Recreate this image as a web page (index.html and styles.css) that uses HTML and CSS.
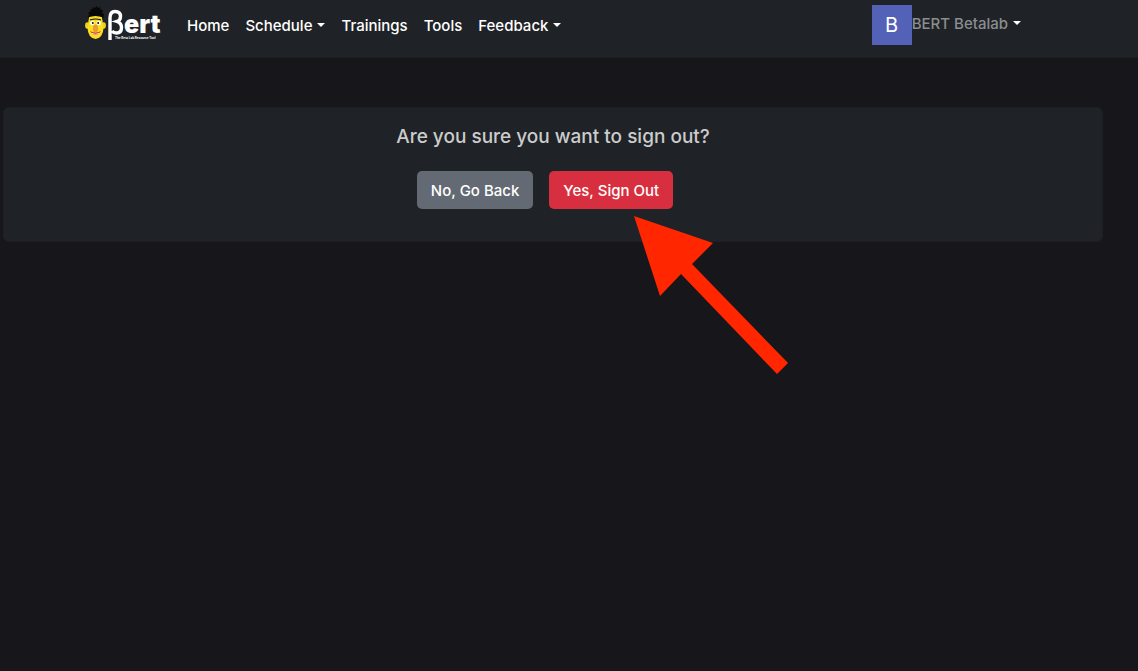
FILE: index.html
```
<!DOCTYPE html>
<html lang="en">
<head>
<meta charset="utf-8">
<meta name="viewport" content="width=device-width, initial-scale=1">
<title>Sign Out - Bert</title>
<link rel="stylesheet" href="styles.css">
</head>
<body>
<header class="navbar">
  <a class="brand" href="#" aria-label="Bert home">
    <svg class="brand-logo" viewBox="0 0 78 38" width="78" height="38">
      <path d="M4 15 L5 9 L4 8 L6.500 6.500 L6 4.500 L8.500 4 L9 2 L11 3 L12.500 1 L14 3 L16 2 L16.500 4.500 L19 5 L18 8 L20 9 L19 15Z" fill="#080808"/>
      <ellipse cx="3.300" cy="20.500" rx="2.200" ry="3.200" fill="#f0cf20"/>
      <ellipse cx="19.700" cy="20.500" rx="2.200" ry="3.200" fill="#f0cf20"/>
      <path d="M5 12 Q11.500 3 18 12 L19.500 23 Q19 33 11.500 34 Q4 33 3.500 23Z" fill="#fade1f"/>
      <path d="M4 12.500 Q11.500 9.500 19 12.500 L18 10 Q11.500 3 5 10Z" fill="#080808"/>
      <path d="M6 15 Q11.500 13 17 15" stroke="#111" stroke-width="1.200" fill="none"/>
      <circle cx="8.300" cy="18" r="2.300" fill="#fff"/>
      <circle cx="14.700" cy="18" r="2.300" fill="#fff"/>
      <circle cx="8.800" cy="18" r="1" fill="#111"/>
      <circle cx="14.200" cy="18" r="1" fill="#111"/>
      <path d="M6 26 Q11.500 34 17 26 Q11.500 29 6 26Z" fill="#c52b2b"/>
      <path d="M7.500 27.500 Q11.500 30 15.500 27.500 L14.500 29 Q11.500 30 8.500 29Z" fill="#fff"/>
      <ellipse cx="11.500" cy="23.500" rx="2.600" ry="4" fill="#f39a2c"/>
      <path d="M26 35 V13 Q26 6.500 31 6.500 Q36.500 6.500 36.500 11.500 Q36.500 15.500 33 16.500 Q37.500 18 37.500 22.500 Q37.500 28 32.500 28 Q29.500 28 28 26" fill="none" stroke="#fff" stroke-width="3.400"/>
      <text class="logo-word" x="40" y="28">ert</text>
      <text class="logo-tag" x="31" y="34">The Beta Lab Resource Tool</text>
    </svg>
  </a>
  <nav class="nav-links" aria-label="Main">
    <a class="nav-link" href="#">Home</a>
    <a class="nav-link caret" href="#">Schedule</a>
    <a class="nav-link" href="#">Trainings</a>
    <a class="nav-link" href="#">Tools</a>
    <a class="nav-link caret" href="#">Feedback</a>
  </nav>
  <div class="account">
    <span class="avatar">B</span>
    <a class="account-link caret" href="#">BERT Betalab</a>
  </div>
</header>
<main class="page">
  <section class="card">
    <h1 class="card-title">Are you sure you want to sign out?</h1>
    <div class="actions">
      <button class="btn btn-secondary" type="button">No, Go Back</button>
      <div class="pointed">
        <button class="btn btn-danger" type="submit">Yes, Sign Out</button>
        <svg class="arrow" viewBox="0 0 154 158" width="154" height="158" aria-hidden="true">
          <path d="M0 0 L79 27 L58 48 L154 147 L143 158 L47 58 L26 80Z" fill="#ff2600"/>
        </svg>
      </div>
    </div>
  </section>
</main>
</body>
</html>
```
FILE: styles.css
```
* { box-sizing: border-box; }

body {
  margin: 0;
  min-height: 100vh;
  background: #17161a;
  color: #ccc;
  font: 500 15px/26px Inter, "Liberation Sans", sans-serif;
}

.navbar {
  display: flex;
  align-items: flex-start;
  height: 58px;
  padding: 5px 117px 0 84px;
  background: #1f2327;
  border-bottom: 1px solid #1b1d21;
}

.brand { display: flex; margin-right: 17px; }
.brand-logo { display: block; }
.logo-word { font: 900 25px Inter, sans-serif; fill: #fff; }
.logo-tag { font: 700 3px Inter, sans-serif; fill: #fff; }

.nav-links { display: flex; }

.nav-link {
  padding: 8px;
  color: #fff;
  text-decoration: none;
  white-space: nowrap;
}

.caret::after {
  content: "";
  display: inline-block;
  margin-left: 5px;
  vertical-align: 4px;
  border-top: 4px solid #fff;
  border-right: 4px solid transparent;
  border-left: 4px solid transparent;
}

.account { display: flex; margin-left: auto; }

.avatar {
  width: 40px;
  height: 40px;
  background: #5361b7;
  color: #fff;
  font-size: 20px;
  font-weight: 400;
  line-height: 40px;
  text-align: center;
}

.account-link {
  padding-top: 6px;
  color: #8b8d8f;
  text-decoration: none;
  white-space: nowrap;
}

.page { padding: 49px 35px 0 3px; }

.card {
  padding: 16px 16px 32px;
  border: 1px solid #1c1f23;
  border-radius: 6px;
  background: #1f2327;
  text-align: center;
}

.card-title {
  margin: 0 0 21px;
  font-size: 19px;
  font-weight: 500;
  line-height: 26px;
}

.actions {
  display: flex;
  justify-content: center;
  gap: 16px;
  padding-right: 16px;
}

.pointed { position: relative; }

.btn {
  display: block;
  padding: 6px 13px 4px;
  border: 1px solid transparent;
  border-radius: 5px;
  color: #fff;
  font: inherit;
  white-space: nowrap;
}

.btn-secondary { background: #636a73; }
.btn-danger { background: #d82f40; }

.arrow {
  position: absolute;
  top: 45px;
  left: 85px;
  pointer-events: none;
}
```
